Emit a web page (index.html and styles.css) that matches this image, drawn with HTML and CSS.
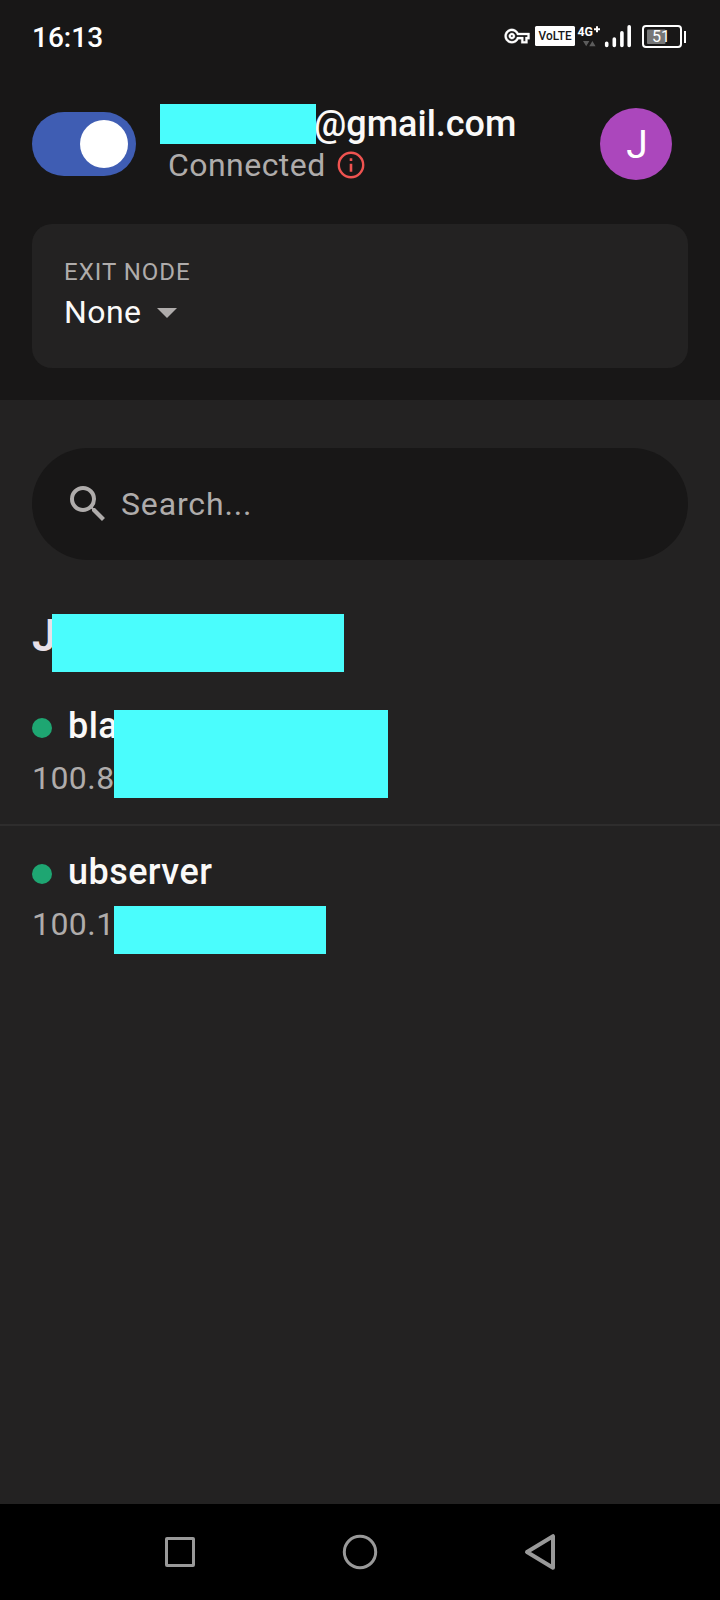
FILE: index.html
```html
<!DOCTYPE html>
<html lang="en">
<head>
<meta charset="utf-8">
<title>Network</title>
<link rel="stylesheet" href="styles.css">
</head>
<body>
<div class="screen">
  <header class="top">
    <div class="status">
      <span class="clock">16:13</span>
      <svg class="status-icons" width="184" height="30" viewBox="503 22 184 30">
        <g transform="translate(504.6 23.6) scale(1.04)"><path fill="#fff" stroke="#fff" stroke-width=".3" d="M22 19h-6v-4h-2.68c-1.14 2.42-3.6 4-6.32 4-3.86 0-7-3.14-7-7s3.14-7 7-7c2.72 0 5.17 1.58 6.32 4H24v6h-2v4zm-4-2h2v-4h2v-2H11.94l-.23-.67C11.01 8.34 9.11 7 7 7c-2.76 0-5 2.24-5 5s2.24 5 5 5c2.11 0 4.01-1.34 4.71-3.33l.23-.67H18v4zM7 15c-1.65 0-3-1.35-3-3s1.35-3 3-3 3 1.35 3 3-1.35 3-3 3zm0-4c-.55 0-1 .45-1 1s.45 1 1 1 1-.45 1-1-.45-1-1-1z"/></g>
        <rect x="535" y="26" width="40" height="20" rx="1.5" fill="#fff"/>
        <text class="volte" x="538.6" y="40.2" textLength="33" lengthAdjust="spacingAndGlyphs">VoLTE</text>
        <text class="net" x="577.5" y="36.2" textLength="15.5" lengthAdjust="spacingAndGlyphs">4G</text>
        <path d="M594 29.3h6M597 26.3v6" stroke="#fff" stroke-width="2"/>
        <path d="M583 41h6.4l-3.2 5.2zM589.2 46.2h6.4L592.4 41z" fill="#5c5c5c"/>
        <path d="M606.7 43.2v2.3M614.3 39v6.5M621.9 32.8v12.7M629.2 26.8v18.7" stroke="#fff" stroke-width="3.6" stroke-linecap="round"/>
        <rect x="643" y="26" width="38" height="21" rx="3" fill="none" stroke="#fff" stroke-width="2"/>
        <rect x="647" y="29.5" width="18.5" height="14.5" rx="1" fill="#777"/>
        <path d="M685 31v12" stroke="#fff" stroke-width="2"/>
        <text class="level" x="652" y="42">51</text>
      </svg>
    </div>
    <div class="account">
      <div class="toggle"><div class="knob"></div></div>
      <div class="who">
        <div class="email"><span class="mask mask-email"></span><span class="domain">@gmail.com</span></div>
        <div class="state">Connected
          <svg class="info" width="28" height="28" viewBox="0 0 28 28"><circle cx="14" cy="14" r="12.2" fill="none" stroke="#ef5350" stroke-width="2.4"/><path d="M14 12.8v8M14 7.3v2.8" stroke="#ef5350" stroke-width="2.6"/></svg>
        </div>
      </div>
      <div class="avatar">J</div>
    </div>
    <div class="exit">
      <div class="exit-label">EXIT NODE</div>
      <div class="exit-value">None<svg class="caret" width="20" height="10" viewBox="0 0 20 10"><path d="M0 0h20L10 10z" fill="#afacab"/></svg></div>
    </div>
  </header>
  <main class="content">
    <div class="search">
      <svg width="48" height="48" viewBox="0 0 24 24"><path fill="#afacab" d="M15.5 14h-.79l-.28-.27A6.471 6.471 0 0 0 16 9.5 6.5 6.5 0 1 0 9.5 16c1.61 0 3.09-.59 4.23-1.57l.27.28v.79l5 4.99L20.49 19l-4.99-5zm-6 0C7.01 14 5 11.99 5 9.5S7.01 5 9.5 5 14 7.01 14 9.5 11.99 14 9.5 14z"/></svg>
      <span>Search...</span>
    </div>
    <h1 class="group">J<span class="mask mask-group"></span></h1>
    <div class="device">
      <div class="name"><i class="dot"></i>bla</div>
      <div class="ip">100.8</div>
      <span class="mask mask-first"></span>
    </div>
    <div class="device">
      <div class="name"><i class="dot"></i>ubserver</div>
      <div class="ip">100.1</div>
      <span class="mask mask-second"></span>
    </div>
  </main>
  <nav class="nav">
    <svg width="36" height="40" viewBox="-18 -20 36 40"><rect x="-13.5" y="-13.5" width="27" height="27" rx=".5"/></svg>
    <svg width="36" height="40" viewBox="-18 -20 36 40"><circle r="15.7"/></svg>
    <svg width="36" height="40" viewBox="-18 -20 36 40"><path class="back" d="M-13 0 L13 -15.8 V15.8 Z"/></svg>
  </nav>
</div>
</body>
</html>
```
FILE: styles.css
```css
* { box-sizing: border-box; }
body { margin: 0; background: #232222; font-family: Roboto, "Noto Sans", sans-serif; }
.screen { width: 720px; height: 1600px; display: flex; flex-direction: column; overflow: hidden; color: #faf9f8; }
.top { height: 400px; padding: 0 32px; background: #181717; }
.status { height: 104px; padding-top: 22px; display: flex; align-items: flex-start; justify-content: space-between; }
.clock { font-size: 28px; font-weight: 500; line-height: 31px; color: #fff; }
.status-icons { display: block; margin-right: 1px; }
.volte { font-size: 13px; font-weight: 500; fill: #181717; }
.net { font-size: 13px; font-weight: 700; fill: #fff; }
.level { font-size: 16px; fill: #fff; }
.account { height: 80px; padding-right: 16px; display: flex; align-items: center; }
.toggle { width: 104px; height: 64px; padding: 8px; border-radius: 32px; background: #3f5db3; display: flex; justify-content: flex-end; }
.knob { width: 48px; height: 48px; border-radius: 50%; background: #fff; }
.who { flex: 1; height: 80px; margin-left: 24px; }
.mask { display: block; background: #4afdfd; }
.email { height: 40px; display: flex; font-size: 36px; font-weight: 500; line-height: 40px; }
.mask-email { width: 156px; z-index: 1; }
.domain { margin-left: -2px; }
.state { height: 42px; padding-left: 8px; display: flex; align-items: center; gap: 11px; font-size: 32px; line-height: 42px; letter-spacing: .45px; color: #afacab; }
.avatar { width: 72px; height: 72px; padding: 1px 0 0 2px; border-radius: 50%; background: #ab47bc; color: #fff; font-size: 39px; line-height: 72px; text-align: center; }
.exit { height: 144px; margin-top: 40px; padding: 32px; border-radius: 20px; background: #232222; }
.exit-label { font-size: 24px; line-height: 32px; letter-spacing: 1px; color: #afacab; }
.exit-value { display: flex; align-items: center; gap: 15px; font-size: 32px; line-height: 48px; letter-spacing: .45px; }
.caret { margin-top: 2px; }
.content { flex: 1; padding-top: 48px; }
.search { height: 112px; margin: 0 32px; padding-left: 32px; border-radius: 56px; background: #181717; display: flex; align-items: center; gap: 9px; font-size: 32px; letter-spacing: .85px; color: #afacab; }
.group { position: relative; height: 44px; margin: 54px 0 22px; padding-left: 32px; font-size: 44px; font-weight: 600; line-height: 44px; color: #e8e0e8; }
.mask-group { position: absolute; left: 52px; top: 0; width: 292px; height: 58px; }
.device { position: relative; height: 144px; padding: 20px 32px; line-height: 52px; }
.device + .device { height: 146px; border-top: 2px solid #2e2d2d; }
.name { height: 52px; display: flex; align-items: center; gap: 16px; font-size: 36px; font-weight: 500; letter-spacing: .45px; }
.dot { width: 20px; height: 20px; margin-top: 4px; border-radius: 50%; background: #1ea672; }
.ip { font-size: 32px; letter-spacing: .45px; color: #afacab; }
.mask-first { position: absolute; left: 114px; top: 30px; width: 274px; height: 88px; }
.mask-second { position: absolute; left: 114px; top: 80px; width: 212px; height: 48px; }
.nav { height: 96px; padding: 0 162px; background: #000; display: flex; align-items: center; justify-content: space-between; }
.nav svg { fill: none; stroke: #999; stroke-width: 3; }
.nav .back { stroke-width: 4; stroke-linejoin: round; }
```
